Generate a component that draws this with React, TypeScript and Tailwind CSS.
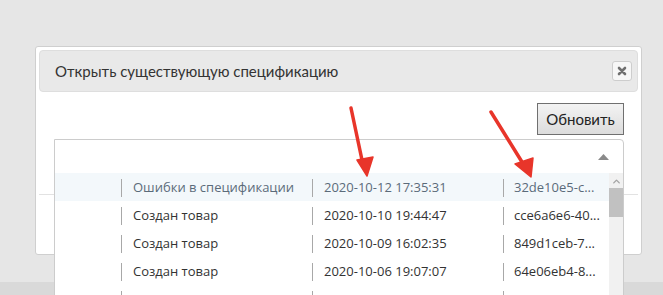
import { ChevronUp } from "lucide-react";

interface Row {
  event: string;
  date: string;
  hash: string;
}

const rows: Row[] = [
  { event: "Ошибки в спецификации", date: "2020-10-12 17:35:31", hash: "32de10e5-c..." },
  { event: "Создан товар", date: "2020-10-10 19:44:47", hash: "cce6a6e6-40..." },
  { event: "Создан товар", date: "2020-10-09 16:02:35", hash: "849d1ceb-7..." },
  { event: "Создан товар", date: "2020-10-06 19:07:07", hash: "64e06eb4-8..." },
  // last row is only partly visible, text below the fold
  { event: "", date: "", hash: "" },
];

const Sep = () => <span className="h-[18px] w-px shrink-0 bg-[#a8a8a8]" />;

const App = () => {
  return (
    <div
      className="relative flex h-[295px] w-[663px] flex-col overflow-hidden bg-[#e6e6e6]"
      style={{ fontFamily: "Lato, 'Open Sans', sans-serif" }}
    >
      <div className="flex-1 pl-[35px] pt-[46px]">
        <div className="flex h-[209px] w-[607px] flex-col rounded-[3px] border border-[#cfcfcf] bg-white p-[3px]">
          <div className="flex h-[42px] items-center justify-between rounded-[4px] border border-[#dedede] bg-[#e9e9e9] pl-[15px] pr-[5px]">
            <span className="text-[15px] text-[#333]">Открыть существующую спецификацию</span>
            <button className="flex h-[20px] w-[20px] items-center justify-center rounded-[3px] border border-[#cdcdcd] bg-[#f7f7f7]">
              <svg width="10" height="10" viewBox="0 0 10 10">
                <path d="M2 2 L8 8 M8 2 L2 8" stroke="#707070" strokeWidth="2.6" strokeLinecap="round" />
              </svg>
            </button>
          </div>
          <div className="flex justify-end pr-[14px] pt-[11px]">
            <button className="h-[32px] w-[87px] border border-[#707070] bg-gradient-to-b from-[#f3f3f3] to-[#dcdcdc] text-[15px] text-[#222]">
              Обновить
            </button>
          </div>
          <div className="mt-[59px] h-px bg-[#e2e2e2]" />
        </div>
      </div>
      <div className="h-[13px] bg-[#d9d9d9]" />

      {/* dropdown list */}
      <div
        className="absolute left-[54px] top-[139px] h-[170px] w-[570px] rounded-tr-[4px] border border-[#cccccc] bg-white"
        style={{ fontFamily: "'Open Sans', sans-serif" }}
      >
        <div className="flex h-[33px] items-center justify-end pr-[14px]">
          <svg width="11" height="6" viewBox="0 0 11 6">
            <path d="M0 6 L5.5 0 L11 6 Z" fill="#8a8a8a" />
          </svg>
        </div>
        <div className="flex">
          <div className="flex-1">
            {rows.map((r, i) => (
              <div
                key={i}
                className={`flex h-[28px] items-center pt-[2px] text-[13px] ${
                  i === 0 ? "bg-[#f3f8fb] text-[#5b6b7a]" : "text-[#333]"
                }`}
              >
                <div className="w-[66px]" />
                <Sep />
                <div className="w-[190px] pl-[11px]">{r.event}</div>
                <Sep />
                <div className="w-[190px] pl-[11px]">{r.date}</div>
                <Sep />
                <div className="pl-[10px]">{r.hash}</div>
              </div>
            ))}
          </div>
          <div className="flex w-[14px] flex-col items-center bg-[#f1f1f1]">
            <ChevronUp size={11} strokeWidth={3} className="mt-[3px] text-[#a3a3a3]" />
            <div className="mt-[1px] h-[29px] w-full bg-[#c1c1c1]" />
          </div>
        </div>
      </div>

      {/* annotation arrows */}
      <svg className="pointer-events-none absolute left-0 top-0" width="663" height="295">
        <path d="M351 108 L362 160" stroke="#e8352a" strokeWidth="3.5" strokeLinecap="round" />
        <path d="M357 160 L373 157 L367 176 Z" fill="#e8352a" stroke="#e8352a" strokeWidth="1.5" strokeLinejoin="round" />
        <path d="M491 112 L522 162" stroke="#e8352a" strokeWidth="3.5" strokeLinecap="round" />
        <path d="M515 164 L533 158 L531 177 Z" fill="#e8352a" stroke="#e8352a" strokeWidth="1.5" strokeLinejoin="round" />
      </svg>
    </div>
  );
};

export default App;
